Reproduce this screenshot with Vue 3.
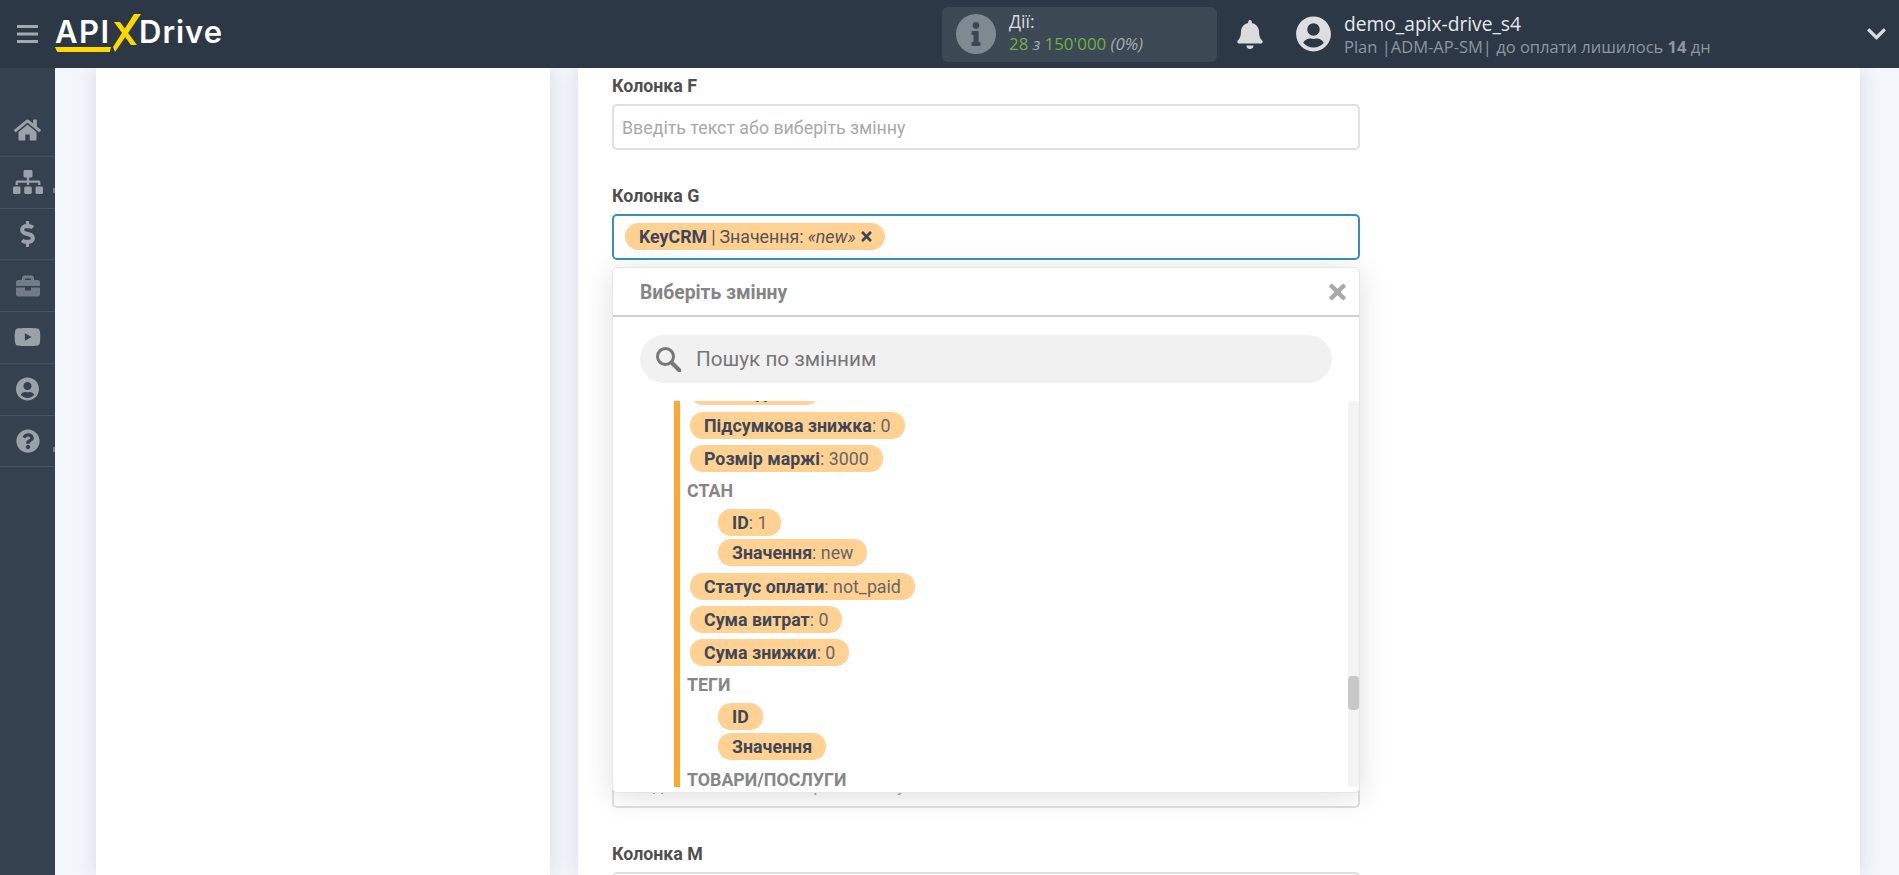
<script setup>
const P = {
  home: 'M280.37 148.26L96 300.11V464a16 16 0 0 0 16 16l112.06-.29a16 16 0 0 0 15.92-16V368a16 16 0 0 1 16-16h64a16 16 0 0 1 16 16v95.64a16 16 0 0 0 16 16.05L464 480a16 16 0 0 0 16-16V300L295.67 148.26a12.19 12.19 0 0 0-15.3 0zM571.6 251.47L488 182.56V44.05a12 12 0 0 0-12-12h-56a12 12 0 0 0-12 12v72.61L318.47 43a48 48 0 0 0-61 0L4.34 251.47a12 12 0 0 0-1.6 16.9l25.5 31A12 12 0 0 0 45.15 301l235.22-193.74a12.19 12.19 0 0 1 15.3 0L530.9 301a12 12 0 0 0 16.9-1.6l25.5-31a12 12 0 0 0-1.7-16.93z',
  sitemap: 'M128 352H32c-17.67 0-32 14.33-32 32v96c0 17.67 14.33 32 32 32h96c17.67 0 32-14.33 32-32v-96c0-17.67-14.33-32-32-32zm-24-80h192v48h48v-48h192v48h48v-57.59c0-21.17-17.23-38.41-38.41-38.41H344v-64h40c17.67 0 32-14.33 32-32V32c0-17.67-14.33-32-32-32H256c-17.67 0-32 14.33-32 32v96c0 17.67 14.33 32 32 32h40v64H94.41C73.23 224 56 241.23 56 262.41V320h48v-48zm264 80h-96c-17.67 0-32 14.33-32 32v96c0 17.67 14.33 32 32 32h96c17.67 0 32-14.33 32-32v-96c0-17.67-14.33-32-32-32zm240 0h-96c-17.67 0-32 14.33-32 32v96c0 17.67 14.33 32 32 32h96c17.67 0 32-14.33 32-32v-96c0-17.67-14.33-32-32-32z',
  dollar: 'M209.2 233.4l-108-31.6C88.7 198.2 80 186.5 80 173.5c0-16.3 13.2-29.5 29.5-29.5h66.3c12.2 0 24.2 3.7 34.2 10.5 6.1 4.1 14.3 3.1 19.5-2l34.8-34c7.1-6.9 6.1-18.4-1.8-24.5C238 74.8 207.4 64.1 176 64V16c0-8.8-7.2-16-16-16h-32c-8.8 0-16 7.2-16 16v48h-2.5C45.8 64-5.4 118.7.5 183.6c4.2 46.1 39.4 83.6 83.8 96.6l102.5 30c12.5 3.7 21.2 15.3 21.2 28.3 0 16.3-13.2 29.5-29.5 29.5h-66.3C100 368 88 364.3 78 357.5c-6.1-4.1-14.3-3.1-19.5 2l-34.8 34c-7.1 6.9-6.1 18.4 1.8 24.5 24.5 19.2 55.1 29.9 86.5 30v48c0 8.8 7.2 16 16 16h32c8.8 0 16-7.2 16-16v-48.2c46.6-.9 90.3-28.6 105.7-72.7 21.5-61.6-14.6-124.8-72.5-141.7z',
  briefcase: 'M320 336c0 8.84-7.16 16-16 16h-96c-8.84 0-16-7.16-16-16v-48H0v144c0 25.6 22.4 48 48 48h416c25.6 0 48-22.4 48-48V288H320v48zm144-208h-80V80c0-25.6-22.4-48-48-48H176c-25.6 0-48 22.4-48 48v48H48c-25.6 0-48 22.4-48 48v80h512v-80c0-25.6-22.4-48-48-48zm-144 0H192V96h128v32z',
  youtube: 'M549.655 124.083c-6.281-23.65-24.787-42.276-48.284-48.597C458.781 64 288 64 288 64S117.22 64 74.629 75.486c-23.497 6.322-42.003 24.947-48.284 48.597-11.412 42.867-11.412 132.305-11.412 132.305s0 89.438 11.412 132.305c6.281 23.65 24.787 41.5 48.284 47.821C117.22 448 288 448 288 448s170.78 0 213.371-11.486c23.497-6.321 42.003-24.171 48.284-47.821 11.412-42.867 11.412-132.305 11.412-132.305s0-89.438-11.412-132.305zm-317.51 213.508V175.185l142.739 81.205-142.739 81.201z',
  user: 'M248 8C111 8 0 119 0 256s111 248 248 248 248-111 248-248S385 8 248 8zm0 96c48.6 0 88 39.4 88 88s-39.4 88-88 88-88-39.4-88-88 39.4-88 88-88zm0 344c-58.7 0-111.3-26.6-146.5-68.2 18.8-35.4 55.6-59.8 98.5-59.8 2.4 0 4.8.4 7.1 1.1 13 4.2 26.6 6.9 40.9 6.9 14.3 0 28-2.7 40.9-6.9 2.3-.7 4.7-1.1 7.1-1.1 42.9 0 79.7 24.4 98.5 59.8C359.3 421.4 306.7 448 248 448z',
  question: 'M504 256c0 136.997-111.043 248-248 248S8 392.997 8 256C8 119.083 119.043 8 256 8s248 111.083 248 248zM262.655 90c-54.497 0-89.255 22.957-116.549 63.758-3.536 5.286-2.353 12.415 2.715 16.258l34.699 26.31c5.205 3.947 12.621 3.008 16.665-2.122 17.864-22.658 30.113-35.797 57.303-35.797 20.429 0 45.698 13.148 45.698 32.958 0 14.976-12.363 22.667-32.534 33.976C247.128 238.528 216 254.941 216 296v4c0 6.627 5.373 12 12 12h56c6.627 0 12-5.373 12-12v-1.333c0-28.462 83.186-29.647 83.186-106.667 0-58.002-60.165-102-116.531-102zM256 338c-25.365 0-46 20.635-46 46 0 25.364 20.635 46 46 46s46-20.636 46-46c0-25.365-20.635-46-46-46z',
  bell: 'M224 512c35.32 0 63.97-28.65 63.97-64H160.03c0 35.35 28.65 64 63.97 64zm215.39-149.71c-19.32-20.76-55.47-51.99-55.47-154.29 0-77.7-54.48-139.9-127.94-155.16V32c0-17.67-14.32-32-31.98-32s-31.98 14.33-31.98 32v20.84C118.56 68.1 64.08 130.3 64.08 208c0 102.3-36.15 133.53-55.47 154.29-6 6.45-8.66 14.16-8.61 21.71.11 16.4 12.98 32 32.1 32h383.8c19.12 0 32-15.6 32.1-32 .05-7.55-2.61-15.27-8.61-21.71z',
  info: 'M20 424.229h20V279.771H20c-11.046 0-20-8.954-20-20V212c0-11.046 8.954-20 20-20h112c11.046 0 20 8.954 20 20v212.229h20c11.046 0 20 8.954 20 20V492c0 11.046-8.954 20-20 20H20c-11.046 0-20-8.954-20-20v-47.771c0-11.046 8.954-20 20-20zM96 0C56.235 0 24 32.235 24 72s32.235 72 72 72 72-32.235 72-72S135.764 0 96 0z',
  times: 'M242.72 256l100.07-100.07c12.28-12.28 12.28-32.19 0-44.48l-22.24-22.24c-12.28-12.28-32.19-12.28-44.48 0L176 189.28 75.93 89.21c-12.28-12.28-32.19-12.28-44.48 0L9.21 111.45c-12.28 12.28-12.28 32.19 0 44.48L109.28 256 9.21 356.07c-12.28 12.28-12.28 32.19 0 44.48l22.24 22.24c12.28 12.28 32.2 12.28 44.48 0L176 322.72l100.07 100.07c12.28 12.28 32.2 12.28 44.48 0l22.24-22.24c12.28-12.28 12.28-32.19 0-44.48L242.72 256z',
  chevron: 'M207.029 381.476L12.686 187.132c-9.373-9.373-9.373-24.569 0-33.941l22.667-22.667c9.357-9.357 24.522-9.375 33.901-.04L224 284.505l154.745-154.021c9.379-9.335 24.544-9.317 33.901.04l22.667 22.667c9.373 9.373 9.373 24.569 0 33.941L240.971 381.476c-9.373 9.372-24.569 9.372-33.942 0z'
}

const navItems = [
  { d: P.home, vb: '0 0 576 512', w: 27, h: 24 },
  { d: P.sitemap, vb: '0 0 640 512', w: 30, h: 24, notch: true },
  { d: P.dollar, vb: '0 0 288 512', w: 15, h: 26 },
  { d: P.briefcase, vb: '0 0 512 512', w: 24, h: 24, dim: true },
  { d: P.youtube, vb: '0 0 576 512', w: 27, h: 24 },
  { d: P.user, vb: '0 0 496 512', w: 23, h: 24 },
  { d: P.question, vb: '0 0 512 512', w: 24, h: 24, notch: true }
]

// columns behind the open dropdown still take their place in the form
const columns = ['F', 'G', 'H', 'I', 'J', 'K', 'L', 'M']

const rows = [
  { type: 'pill', key: 'Накладна', value: '0', cut: true },
  { type: 'pill', key: 'Підсумкова знижка', value: '0' },
  { type: 'pill', key: 'Розмір маржі', value: '3000' },
  { type: 'head', key: 'СТАН' },
  { type: 'pill', key: 'ID', value: '1', nested: true },
  { type: 'pill', key: 'Значення', value: 'new', nested: true, last: true },
  { type: 'pill', key: 'Статус оплати', value: 'not_paid' },
  { type: 'pill', key: 'Сума витрат', value: '0' },
  { type: 'pill', key: 'Сума знижки', value: '0' },
  { type: 'head', key: 'ТЕГИ' },
  { type: 'pill', key: 'ID', nested: true },
  { type: 'pill', key: 'Значення', nested: true, last: true },
  { type: 'head', key: 'ТОВАРИ/ПОСЛУГИ' }
]
</script>

<template>
  <div class="app">
    <header class="topbar">
      <svg class="burger" viewBox="0 0 21 18"><path d="M0 0h21v3H0zM0 7.5h21v3H0zM0 15h21v3H0z" /></svg>
      <div class="logo">
        <span class="logo-api">API</span>
        <svg class="logo-x" viewBox="0 0 32 40">
          <polygon points="4,9 10,9 27,32 21,32" fill="#ffd800" />
          <polygon points="24,1 31,1 5,39 3,34" fill="#ffd800" />
        </svg>
        <span class="logo-drive">Drive</span>
        <span class="logo-line"></span>
      </div>

      <div class="actions-box">
        <span class="info-circle">
          <svg viewBox="0 0 192 512"><path :d="P.info" /></svg>
        </span>
        <div class="actions-text">
          <div class="actions-title">Дії:</div>
          <div class="actions-count">28 <i class="muted">з</i> 150'000 <i class="muted">(0%)</i></div>
        </div>
      </div>

      <svg class="bell" viewBox="0 0 448 512"><path :d="P.bell" /></svg>
      <svg class="avatar" viewBox="0 0 496 512"><path :d="P.user" /></svg>

      <div class="account">
        <div class="account-name">demo_apix-drive_s4</div>
        <div class="account-plan">Plan |ADM-AP-SM| до оплати лишилось <b>14</b> дн</div>
      </div>

      <svg class="chevron" viewBox="0 0 448 512"><path :d="P.chevron" /></svg>
    </header>

    <div class="body">
      <nav class="sidebar">
        <div class="nav-gap"></div>
        <div v-for="(item, i) in navItems" :key="i" class="nav-item" :class="{ notch: item.notch }">
          <svg :class="{ dim: item.dim }" :viewBox="item.vb" :width="item.w" :height="item.h"><path :d="item.d" /></svg>
        </div>
      </nav>

      <main class="content">
        <section class="card card-left"></section>
        <section class="card card-main">
          <div class="form">
            <div v-for="col in columns" :key="col" class="field">
              <label class="field-label">Колонка {{ col }}</label>
              <div v-if="col === 'G'" class="input input-active">
                <span class="chip">
                  <b>KeyCRM</b>
                  <span class="chip-sep">|</span>
                  <span>Значення:</span>
                  <i>«new»</i>
                  <svg viewBox="0 0 352 512"><path :d="P.times" /></svg>
                </span>
              </div>
              <div v-else class="input placeholder">Введіть текст або виберіть змінну</div>

              <div v-if="col === 'G'" class="dropdown">
                <div class="dropdown-head">
                  <span>Виберіть змінну</span>
                  <svg viewBox="0 0 352 512"><path :d="P.times" /></svg>
                </div>
                <div class="search">
                  <svg viewBox="0 0 26 26">
                    <circle cx="10.5" cy="10.5" r="8" />
                    <line x1="16.5" y1="16.5" x2="24.5" y2="24.5" />
                  </svg>
                  <span>Пошук по змінним</span>
                </div>
                <div class="list-wrap">
                  <div class="list">
                    <div class="list-inner">
                      <template v-for="(row, i) in rows" :key="i">
                        <div v-if="row.type === 'head'" class="group-head">{{ row.key }}</div>
                        <div v-else class="pill-row" :class="{ nested: row.nested, last: row.last, cut: row.cut }">
                          <span class="pill"><b>{{ row.key }}</b><template v-if="row.value">: {{ row.value }}</template></span>
                        </div>
                      </template>
                    </div>
                  </div>
                  <div class="scroll-track"><div class="scroll-thumb"></div></div>
                </div>
              </div>
            </div>
          </div>
        </section>
      </main>
    </div>
  </div>
</template>

<style>
html, body {
  margin: 0;
  height: 100%;
  overflow: hidden;
}
</style>

<style scoped>
.app {
  height: 875px;
  overflow: hidden;
  display: flex;
  flex-direction: column;
  font-family: Roboto, "Liberation Sans", sans-serif;
  background: #f3f6fb;
}

/* Top bar */
.topbar {
  flex: none;
  position: relative;
  z-index: 3;
  height: 68px;
  background: #2c3846;
  display: flex;
  align-items: center;
}

.burger {
  width: 21px;
  height: 18px;
  margin-left: 17px;
  fill: #a4a8ad;
  flex: none;
}

.logo {
  position: relative;
  display: flex;
  align-items: center;
  margin-left: 17px;
  width: 170px;
  height: 40px;
  font-family: Inter, "Open Sans", sans-serif;
  font-weight: 600;
  font-size: 31px;
  color: #fff;
  flex: none;
}

.logo-api {
  width: 57px;
  line-height: 40px;
  margin-top: -4px;
  letter-spacing: 1.5px;
}

.logo-x {
  width: 32px;
  height: 40px;
  flex: none;
  margin-top: -2px;
  margin-left: -2px;
}

.logo-drive {
  line-height: 40px;
  margin-top: -4px;
  margin-left: -3px;
  letter-spacing: 1px;
}

.logo-line {
  position: absolute;
  left: 0;
  top: 33px;
  width: 56px;
  height: 5px;
  background: #ffd800;
  clip-path: polygon(0 0, 100% 0, 98% 100%, 4% 100%);
}

.actions-box {
  flex: none;
  margin-left: 717px;
  width: 275px;
  height: 55px;
  box-sizing: border-box;
  padding-left: 14px;
  border-radius: 6px;
  background: #3c4854;
  display: flex;
  align-items: center;
  gap: 13px;
  font-family: "Open Sans", sans-serif;
}

.actions-text {
  padding-bottom: 3px;
}

.info-circle {
  width: 40px;
  height: 40px;
  border-radius: 50%;
  background: #7f8991;
  display: flex;
  align-items: center;
  justify-content: center;
}

.info-circle svg {
  width: 10px;
  height: 24px;
  fill: #3a4653;
}

.actions-title {
  font-size: 17.6px;
  line-height: 23px;
  color: #d9dcdf;
}

.actions-count {
  font-size: 16.9px;
  line-height: 22px;
  color: #6fb13f;
}

.muted {
  color: #a5abb0;
}

.bell {
  flex: none;
  width: 26px;
  height: 29px;
  margin-left: 20px;
  fill: #dcdcdc;
}

.avatar {
  flex: none;
  width: 35px;
  height: 36px;
  margin-left: 33px;
  fill: #dedede;
}

.account {
  flex: none;
  margin-left: 13px;
  font-family: "Open Sans", sans-serif;
}

.account-name {
  font-size: 19.2px;
  line-height: 24px;
  color: #e6e8ea;
}

.account-plan {
  font-size: 16.5px;
  line-height: 21px;
  color: #8d96a0;
}

.chevron {
  position: absolute;
  right: 13px;
  top: 23px;
  width: 19px;
  height: 22px;
  fill: #d8dadc;
}

/* Page body */
.body {
  flex: 1;
  display: flex;
  min-height: 0;
}

.sidebar {
  flex: none;
  position: relative;
  z-index: 2;
  width: 55px;
  background: #36414f;
}

.nav-gap {
  height: 37px;
}

.nav-item {
  position: relative;
  height: 50.75px;
  box-sizing: content-box;
  border-bottom: 1px solid #4a5462;
  display: flex;
  align-items: center;
  justify-content: center;
}

.nav-item svg {
  fill: #9aa1a9;
}

.nav-item svg.dim {
  fill: #727c88;
}

.nav-item.notch::after {
  content: "";
  position: absolute;
  right: 0;
  top: 31px;
  width: 2px;
  height: 5px;
  background: #727c88;
}

.content {
  flex: 1;
  min-width: 0;
  display: flex;
  gap: 28px;
  padding: 0 39px 0 41px;
}

.card {
  background: #fff;
  box-shadow: 0 0 20px rgba(40, 50, 70, 0.13);
}

.card-left {
  flex: none;
  width: 454px;
}

.card-main {
  flex: 1;
  min-width: 0;
}

/* Form */
.form {
  width: 748px;
  margin-left: 34px;
  padding-top: 9px;
}

.field {
  position: relative;
  margin-bottom: 36.67px;
}

.field-label {
  display: block;
  height: 18px;
  line-height: 18px;
  margin-bottom: 9px;
  font-size: 17.8px;
  font-weight: 700;
  color: #4f4f4f;
}

.input {
  box-sizing: border-box;
  height: 46px;
  border: 2px solid #e0e0e0;
  border-radius: 5px;
  display: flex;
  align-items: center;
  padding-left: 8px;
  font-size: 17.8px;
  background: #fff;
}

.placeholder {
  color: #a8a8a8;
}

.input-active {
  border-color: #3a8fb7;
  padding-left: 11px;
}

.chip {
  display: inline-flex;
  align-items: center;
  gap: 4px;
  height: 27px;
  padding: 0 13px 0 14px;
  border-radius: 14px;
  background: #ffd294;
  font-size: 17.8px;
  color: #555;
}

.chip b {
  color: #3f4756;
}

.chip svg {
  width: 11px;
  height: 15px;
  fill: #3f4756;
  margin-left: 1px;
}

/* Dropdown */
.dropdown {
  position: absolute;
  z-index: 2;
  left: 0;
  right: 0;
  top: 80px;
  height: 526px;
  box-sizing: border-box;
  background: #fff;
  border: 1px solid #e6e6e6;
  border-radius: 5px;
  box-shadow: 0 4px 30px rgba(0, 0, 0, 0.13);
  display: flex;
  flex-direction: column;
}

.dropdown-head {
  flex: none;
  height: 49px;
  box-sizing: border-box;
  border-bottom: 2px solid #cfcfcf;
  padding: 2px 13px 0 27px;
  display: flex;
  align-items: center;
  justify-content: space-between;
  font-size: 19.3px;
  font-weight: 700;
  color: #858585;
}

.dropdown-head svg {
  width: 17px;
  height: 24px;
  fill: #aaa;
}

.search {
  flex: none;
  height: 48px;
  margin: 18px 27px 18px;
  border-radius: 24px;
  background: #f1f1f1;
  display: flex;
  align-items: center;
  gap: 15px;
  padding-left: 15px;
  font-size: 20.7px;
  color: #777;
}

.search svg {
  width: 26px;
  height: 26px;
  fill: none;
  stroke: #777;
  stroke-width: 3;
}

.search line {
  stroke-width: 4;
  stroke-linecap: round;
}

.list-wrap {
  flex: none;
  height: 386px;
  display: flex;
}

.list {
  flex: 1;
  min-width: 0;
  overflow: hidden;
  padding-left: 61px;
}

.list-inner {
  height: 100%;
  border-left: 6px solid #ffa733;
  padding-left: 7px;
  overflow: hidden;
}

.pill-row {
  height: 33px;
  display: flex;
  align-items: flex-start;
  padding-left: 3px;
}

.pill-row.nested {
  height: 30.5px;
  padding-left: 31px;
}

.pill-row.nested.last {
  height: 33.5px;
}

.pill-row.cut {
  height: 11px;
  box-sizing: border-box;
  padding-bottom: 7px;
  align-items: flex-end;
  overflow: hidden;
}

.pill-row.cut .pill {
  box-sizing: border-box;
  padding-top: 3px;
}

.pill {
  display: inline-flex;
  align-items: center;
  height: 27px;
  flex: none;
  padding: 0 14px;
  border-radius: 13px;
  background: #ffd294;
  font-size: 17.8px;
  white-space: pre;
  color: #666;
}

.pill b {
  color: #3f4756;
}

.group-head {
  height: 31px;
  line-height: 26px;
  font-size: 17.8px;
  font-weight: 700;
  color: #868686;
}

.scroll-track {
  flex: none;
  width: 11px;
  height: 100%;
  border-radius: 3px;
  background: #f4f4f4;
}

.scroll-thumb {
  height: 34px;
  margin-top: 275px;
  border-radius: 4px;
  background: #c8c8c8;
}
</style>
